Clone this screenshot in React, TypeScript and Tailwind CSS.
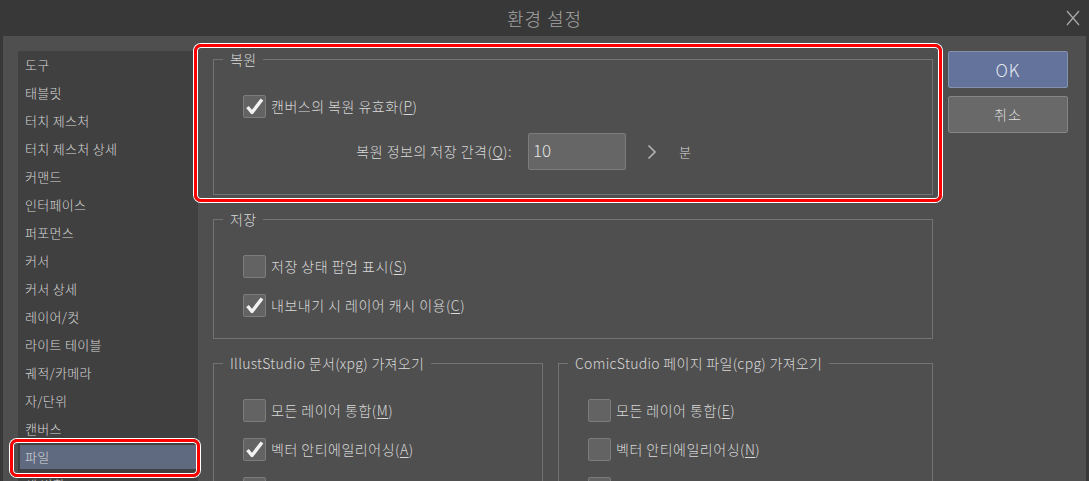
import React from "react";

const FONT = { fontFamily: '"Noto Sans CJK KR", "Noto Sans", sans-serif' };

const MENU = [
    "도구",
    "태블릿",
    "터치 제스처",
    "터치 제스처 상세",
    "커맨드",
    "인터페이스",
    "퍼포먼스",
    "커서",
    "커서 상세",
    "레이어/컷",
    "라이트 테이블",
    "궤적/카메라",
    "자/단위",
    "캔버스",
    "파일",
    "색 변환",
];

const Check = ({ checked }: { checked?: boolean }) => (
    <span className="flex h-[23px] w-[23px] shrink-0 items-center justify-center rounded-[2px] border border-[#7c7c7c] bg-[#636363]">
        {checked && (
            <svg width="21" height="21" viewBox="0 0 21 21">
                <polyline
                    points="3.5,11 8,16.5 18,3.5"
                    fill="none"
                    stroke="#f2f2f2"
                    strokeWidth="3.4"
                    strokeLinejoin="round"
                />
            </svg>
        )}
    </span>
);

const Option = ({
    label,
    hotkey,
    checked,
}: {
    label: string;
    hotkey: string;
    checked?: boolean;
}) => (
    <div className="flex h-[23px] items-center gap-[5px]">
        <Check checked={checked} />
        <span className="whitespace-nowrap text-[14px] tracking-[0.5px] text-[#d8d8d8]">
            {label}(<span className="underline underline-offset-2">{hotkey}</span>)
        </span>
    </div>
);

// legend sits after the fieldset's left padding, so pull it back
const Group = ({
    title,
    className,
    children,
}: {
    title: string;
    className: string;
    children: React.ReactNode;
}) => (
    <fieldset
        className={`shrink-0 border border-[#737373] pl-[29px] pt-[27px] ${className}`}
    >
        <legend className="-ml-[20px] px-[7px] text-[14px] leading-[18px] tracking-[0.3px] whitespace-nowrap text-[#d8d8d8]">
            {title}
        </legend>
        {children}
    </fieldset>
);

export default function App() {
    return (
        <div
            className="relative h-[481px] w-[1089px] overflow-hidden bg-[#383838] font-light"
            style={FONT}
        >
            {/* title bar */}
            <div className="relative flex h-[36px] items-center justify-center">
                <span className="text-[18px] tracking-[1px] text-[#a4a4a4]">환경 설정</span>
                <svg
                    className="absolute right-[9px] top-[10px]"
                    width="14"
                    height="16"
                    viewBox="0 0 14 16"
                >
                    <path
                        d="M1 1 L13 15 M13 1 L1 15"
                        stroke="#a8a8a8"
                        strokeWidth="1.3"
                        fill="none"
                    />
                </svg>
            </div>

            {/* body */}
            <div className="mx-[3px] flex h-[445px] bg-[#4f4f4f] pl-[15px] pt-[15px]">
                {/* category list */}
                <div className="w-[180px] shrink-0 bg-[#404040]">
                    {MENU.map((item) => (
                        <div key={item} className="h-[28px] p-[2px]">
                            <div
                                className={`flex h-[24px] items-center px-[5px] text-[13px] tracking-[0.3px] text-[#d6d6d6] ${
                                    item === "파일" ? "bg-[#5f6a80]" : ""
                                }`}
                            >
                                {item}
                            </div>
                        </div>
                    ))}
                </div>

                {/* settings */}
                <div className="-mt-[1px] ml-[15px] flex w-[720px] shrink-0 flex-col gap-[15px]">
                    <Group title="복원" className="h-[145px]">
                        <Option label="캔버스의 복원 유효화" hotkey="P" checked />
                        <div className="mt-[15px] flex items-center">
                            <span className="w-[269px] text-right text-[14px] tracking-[0.5px] text-[#d8d8d8]">
                                복원 정보의 저장 간격(
                                <span className="underline underline-offset-2">Q</span>):
                            </span>
                            <div className="ml-[16px] flex h-[37px] w-[98px] items-center rounded-[2px] border border-[#7c7c7c] bg-[#666666] pb-[3px] pl-[4px] text-[17px] text-[#e4e4e4]">
                                10
                            </div>
                            <svg className="ml-[21px]" width="10" height="16" viewBox="0 0 10 16">
                                <polyline
                                    points="1.5,1.5 8,8 1.5,14.5"
                                    fill="none"
                                    stroke="#b4b4b4"
                                    strokeWidth="1.6"
                                />
                            </svg>
                            <span className="ml-[22px] text-[13px] text-[#d8d8d8]">분</span>
                        </div>
                    </Group>

                    <Group title="저장" className="h-[129px]">
                        <div className="flex flex-col gap-[16px]">
                            <Option label="저장 상태 팝업 표시" hotkey="S" />
                            <Option label="내보내기 시 레이어 캐시 이용" hotkey="C" checked />
                        </div>
                    </Group>

                    <div className="flex shrink-0 gap-[15px]">
                        <Group title="IllustStudio 문서(xpg) 가져오기" className="h-[160px] w-[330px]">
                            <div className="flex flex-col gap-[16px]">
                                <Option label="모든 레이어 통합" hotkey="M" />
                                <Option label="벡터 안티에일리어싱" hotkey="A" checked />
                                <Option label="텍스트 레이어 래스터화" hotkey="T" />
                            </div>
                        </Group>
                        <Group title="ComicStudio 페이지 파일(cpg) 가져오기" className="h-[160px] w-[375px]">
                            <div className="flex flex-col gap-[16px]">
                                <Option label="모든 레이어 통합" hotkey="E" />
                                <Option label="벡터 안티에일리어싱" hotkey="N" />
                                <Option label="텍스트 레이어 래스터화" hotkey="X" />
                            </div>
                        </Group>
                    </div>
                </div>

                {/* buttons */}
                <div className="ml-[15px] flex w-[120px] shrink-0 flex-col gap-[8px]">
                    <button className="flex h-[37px] items-center justify-center rounded-[2px] border border-[#8490ac] bg-[#63739b] text-[17px] tracking-[1px] text-[#e2e6f0]">
                        OK
                    </button>
                    <button className="flex h-[37px] items-center justify-center rounded-[2px] border border-[#858585] bg-[#696969] text-[14px] tracking-[1px] text-[#dedede]">
                        취소
                    </button>
                </div>
            </div>

            {/* annotation highlights */}
            <div className="pointer-events-none absolute left-[194px] top-[44px] h-[158px] w-[748px] rounded-[7px] border-[3px] border-[#ff0000] shadow-[0_0_0_1px_#ffffff,inset_0_0_0_1px_#ffffff]" />
            <div className="pointer-events-none absolute left-[10px] top-[439px] h-[38px] w-[190px] rounded-[7px] border-[3px] border-[#ff0000] shadow-[0_0_0_1px_#ffffff,inset_0_0_0_1px_#ffffff]" />
        </div>
    );
}
